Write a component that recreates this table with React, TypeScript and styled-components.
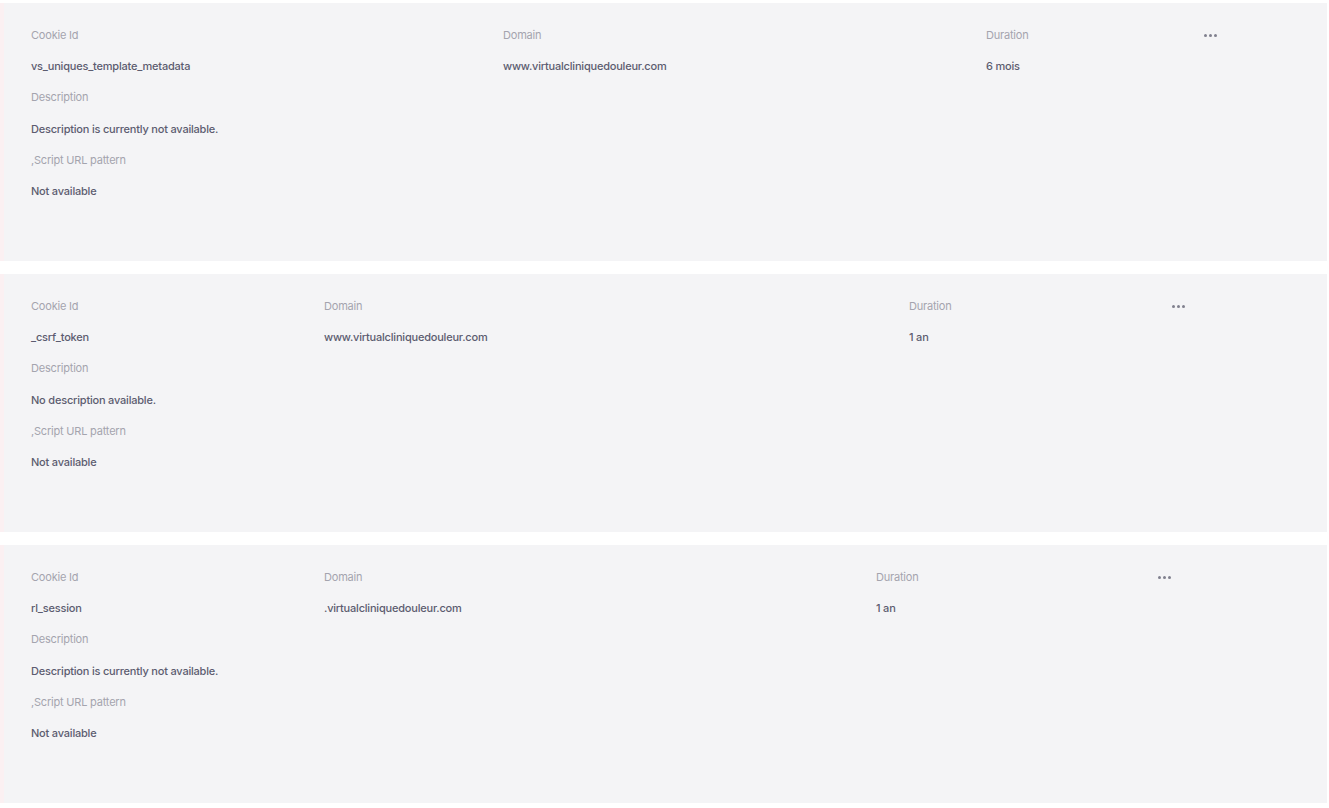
import styled, { createGlobalStyle } from 'styled-components';

const GlobalStyle = createGlobalStyle`
  html, body {
    margin: 0;
    padding: 0;
    background: #ffffff;
  }
  body {
    font-family: Inter, "Noto Sans", sans-serif;
  }
`;

const Page = styled.div`
  display: flex;
  flex-direction: column;
  gap: 13px;
  padding: 3px 2px 0 0;
`;

const Card = styled.section`
  background: #f4f4f6;
  height: 258px;
  box-sizing: border-box;
  padding: 17px 0 0 27px;
  border-left: 4px solid #fbf0f2;
`;

const HeadRow = styled.div<{ cols: string }>`
  display: grid;
  grid-template-columns: ${p => p.cols};
  align-items: center;
`;

const Label = styled.div`
  font-size: 11px;
  line-height: 31.2px;
  color: #a4a4ae;
  font-weight: 400;
  letter-spacing: -0.2px;
`;

const Value = styled.div`
  font-size: 11px;
  line-height: 31.2px;
  color: #5c5c70;
  font-weight: 500;
  letter-spacing: -0.2px;
`;

const Dots = styled.div`
  display: flex;
  gap: 2px;
  align-items: center;
  height: 31px;
`;

const Dot = styled.span`
  width: 3px;
  height: 3px;
  border-radius: 50%;
  background: #80808e;
`;

type Cookie = {
  id: string;
  domain: string;
  duration: string;
  description: string;
  cols: string;
};

const cookies: Cookie[] = [
  {
    id: 'vs_uniques_template_metadata',
    domain: 'www.virtualcliniquedouleur.com',
    duration: '6 mois',
    description: 'Description is currently not available.',
    cols: '472px 483px 218px 1fr',
  },
  {
    id: '_csrf_token',
    domain: 'www.virtualcliniquedouleur.com',
    duration: '1 an',
    description: 'No description available.',
    cols: '293px 585px 263px 1fr',
  },
  {
    id: 'rl_session',
    domain: '.virtualcliniquedouleur.com',
    duration: '1 an',
    description: 'Description is currently not available.',
    cols: '293px 552px 282px 1fr',
  },
];

const CookieCard = ({ c }: { c: Cookie }) => (
  <Card>
    <HeadRow cols={c.cols}>
      <Label>Cookie Id</Label>
      <Label>Domain</Label>
      <Label>Duration</Label>
      <Dots>
        <Dot />
        <Dot />
        <Dot />
      </Dots>
      <Value>{c.id}</Value>
      <Value>{c.domain}</Value>
      <Value>{c.duration}</Value>
      <div />
    </HeadRow>
    <Label>Description</Label>
    <Value>{c.description}</Value>
    <Label>,Script URL pattern</Label>
    <Value>Not available</Value>
  </Card>
);

export default function App() {
  return (
    <Page>
      <GlobalStyle />
      {cookies.map(c => (
        <CookieCard key={c.id} c={c} />
      ))}
    </Page>
  );
}
